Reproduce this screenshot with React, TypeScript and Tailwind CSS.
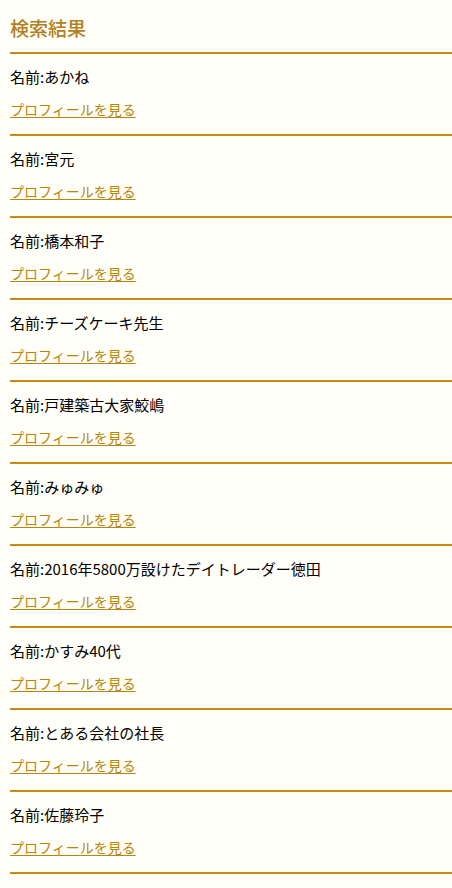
import React from "react";

const names = [
  "あかね",
  "宮元",
  "橋本和子",
  "チーズケーキ先生",
  "戸建築古大家鮫嶋",
  "みゅみゅ",
  "2016年5800万設けたデイトレーダー徳田",
  "かすみ40代",
  "とある会社の社長",
  "佐藤玲子",
];

const App: React.FC = () => {
  return (
    <div
      className="min-h-[888px] w-[452px] bg-[#fffef8] pl-[10px]"
      style={{ fontFamily: '"Noto Sans CJK JP", "Noto Sans", sans-serif' }}
    >
      {/* Heading */}
      <div className="border-b-2 border-[#c98a10] pt-[16px] pb-[12px]">
        <h2 className="text-[19px] leading-[24px] font-medium text-[#b27f22]">
          検索結果
        </h2>
      </div>

      {/* Results */}
      {names.map((name, i) => (
        <div
          key={i}
          className="border-b-2 border-[#c98a10] pt-[11px] pb-[13px]"
        >
          <p className="text-[15px] leading-[24px] text-black">名前:{name}</p>
          <a
            href="#"
            className="mt-[8px] block w-fit text-[14px] leading-[24px] text-[#b8860b] underline underline-offset-2"
          >
            プロフィールを見る
          </a>
        </div>
      ))}
    </div>
  );
};

export default App;
